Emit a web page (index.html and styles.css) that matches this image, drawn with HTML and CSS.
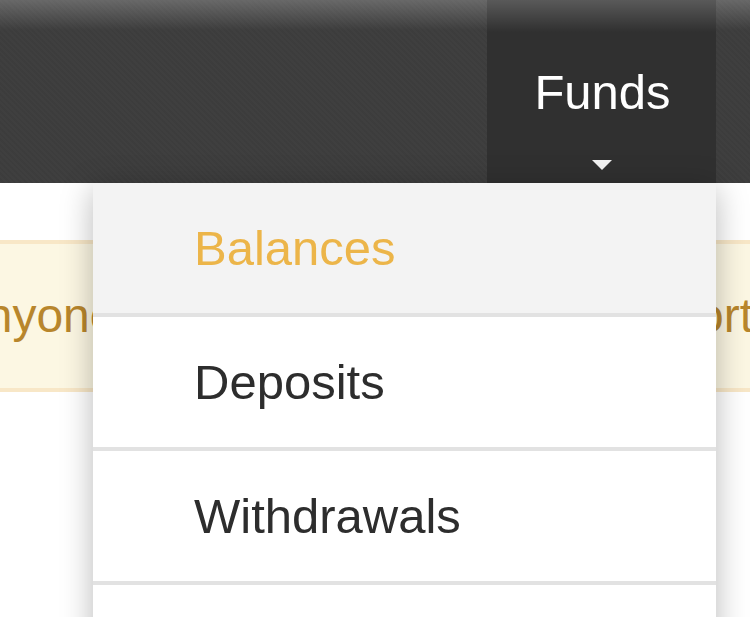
FILE: index.html
```html
<!DOCTYPE html>
<html lang="en">
<head>
<meta charset="utf-8">
<title>Funds</title>
<link rel="stylesheet" href="styles.css">
</head>
<body>
<header class="navbar">
  <nav class="nav">
    <div class="nav-item dropdown open">
      <a class="nav-link" href="#">
        <span class="nav-label">Funds</span>
        <span class="caret"></span>
      </a>
      <ul class="dropdown-menu">
        <li class="menu-item active"><a href="#">Balances</a></li>
        <li class="menu-item"><a href="#">Deposits</a></li>
        <li class="menu-item"><a href="#">Withdrawals</a></li>
        <li class="menu-item menu-item-empty"><a href="#"></a></li>
      </ul>
    </div>
  </nav>
</header>
<main class="content">
  <div class="alert">
    <span class="alert-left">anyone</span>
    <span class="alert-right">support</span>
  </div>
</main>
</body>
</html>
```

FILE: styles.css
```css
html {
  overflow: hidden;
}

body {
  margin: 0;
  padding: 0;
  height: 617px;
  overflow: hidden;
  background: #ffffff;
  font-family: "Liberation Sans", Arial, Helvetica, sans-serif;
}

.navbar {
  height: 183px;
  background:
    linear-gradient(to bottom, rgba(255,255,255,0.22) 0, rgba(255,255,255,0.0) 30px),
    repeating-linear-gradient(45deg, rgba(255,255,255,0.012) 0 2px, rgba(0,0,0,0.012) 2px 4px),
    #3d3d3d;
  position: relative;
  z-index: 2;
}

.nav {
  display: flex;
  justify-content: flex-end;
  height: 100%;
  padding-right: 34px;
}

.nav-item {
  position: relative;
  width: 229px;
  height: 100%;
}

.nav-item.open {
  background:
    linear-gradient(to bottom, rgba(255,255,255,0.2) 0, rgba(255,255,255,0.0) 32px),
    #303030;
}

.nav-link {
  display: flex;
  flex-direction: column;
  align-items: center;
  height: 100%;
  box-sizing: border-box;
  padding-top: 65px;
  color: #ffffff;
  text-decoration: none;
}

.nav-label {
  font-size: 49px;
  line-height: 54px;
  padding-left: 2px;
}

.caret {
  display: block;
  width: 0;
  height: 0;
  margin-top: 41px;
  border-left: 10px solid transparent;
  border-right: 10px solid transparent;
  border-top: 10px solid #f2f2f2;
}

.dropdown-menu {
  position: absolute;
  top: 100%;
  right: 0;
  width: 623px;
  margin: 0;
  padding: 0;
  list-style: none;
  background: #ffffff;
  box-shadow: 0 6px 30px rgba(0,0,0,0.28);
}

.menu-item {
  border-bottom: 4px solid #e2e2e2;
}

.menu-item a {
  display: block;
  height: 54px;
  padding: 38px 97px 38px 101px;
  font-size: 49px;
  line-height: 54px;
  color: #2d2d2d;
  text-decoration: none;
}

.menu-item.active {
  background: #f3f3f3;
}

.menu-item.active a {
  color: #ecb549;
}

.content {
  padding-top: 57px;
}

.alert {
  display: flex;
  justify-content: space-between;
  align-items: center;
  height: 144px;
  background: #fcf7e3;
  border-top: 4px solid #f8e7c7;
  border-bottom: 4px solid #f8e7c7;
  color: #b8862c;
  font-size: 48px;
  line-height: 54px;
  white-space: nowrap;
  overflow: hidden;
}

.alert-left {
  margin-left: -41px;
}

.alert-right {
  margin-right: -3px;
}
```
